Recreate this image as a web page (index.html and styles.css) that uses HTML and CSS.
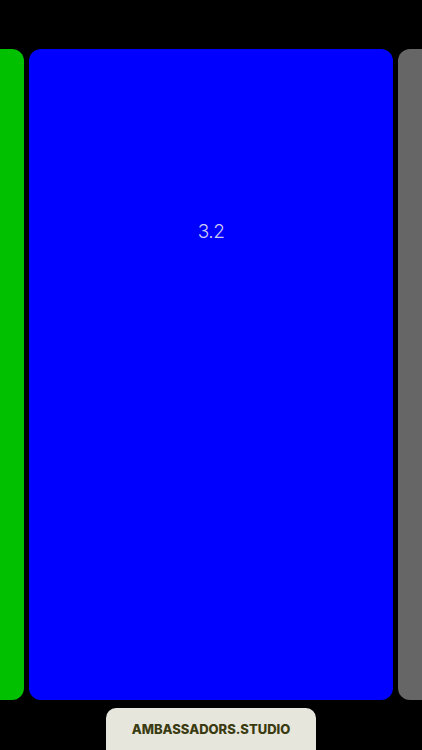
FILE: index.html
```html
<!DOCTYPE html>
<html>
<head>
<meta charset="utf-8">
<link rel="stylesheet" href="styles.css">
</head>
<body>
<div class="screen">
  <div class="track">
    <div class="card green"></div>
    <div class="card blue"><span class="label">3.2</span></div>
    <div class="card gray"></div>
  </div>
  <div class="footer">
    <div class="badge">AMBASSADORS.STUDIO</div>
  </div>
</div>
</body>
</html>
```
FILE: styles.css
```css
html, body {
  margin: 0;
  padding: 0;
  background: #000;
}
.screen {
  width: 422px;
  height: 750px;
  overflow: hidden;
  display: flex;
  flex-direction: column;
  background: #000;
  font-family: Inter, "Liberation Sans", sans-serif;
}
.track {
  flex: 0 0 651px;
  margin-top: 49px;
  height: 651px;
  display: flex;
  justify-content: center;
  gap: 5px;
  overflow: hidden;
}
.card {
  flex: 0 0 364px;
  height: 651px;
  border-radius: 12px;
}
.green { background: #00c000; }
.blue {
  background: #0000ff;
  display: flex;
  justify-content: center;
  padding-top: 172px;
  box-sizing: border-box;
}
.gray { background: #666666; }
.label {
  color: #c9c9f2;
  font-size: 19px;
  font-weight: 300;
  line-height: 22px;
  height: 22px;
  letter-spacing: -0.5px;
}
.footer {
  flex: 0 0 42px;
  margin-top: 8px;
  display: flex;
  justify-content: center;
}
.badge {
  width: 210px;
  height: 42px;
  background: #e6e6dc;
  border-radius: 10px 10px 0 0;
  box-sizing: border-box;
  padding-top: 13px;
  text-align: center;
  color: #3b3b12;
  font-weight: 800;
  font-size: 13px;
  line-height: 16px;
}
```
